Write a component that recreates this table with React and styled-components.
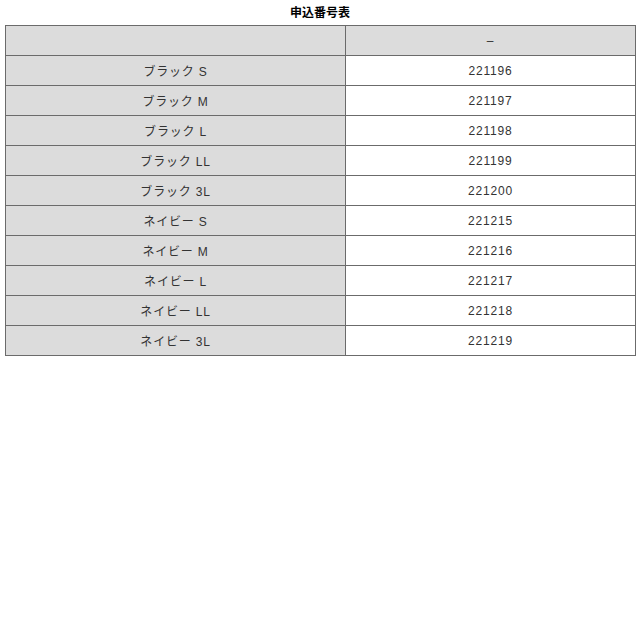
import React from 'react';
import styled, { createGlobalStyle } from 'styled-components';

const GlobalStyle = createGlobalStyle`
    body {
        margin: 0;
        background: #ffffff;
        font-family: "Liberation Sans", "Noto Sans CJK JP", sans-serif;
        color: #333333;
    }
`;

const Wrapper = styled.div`
    padding: 0 5px;
`;

const Title = styled.div`
    height: 25px;
    line-height: 26px;
    text-align: center;
    font-size: 12px;
    font-weight: bold;
    color: #000000;
`;

const Table = styled.table`
    width: 631px;
    border-collapse: collapse;
    table-layout: fixed;
    font-size: 12px;
    letter-spacing: 0.8px;
`;

const Cell = styled.td`
    height: 29px;
    padding: 0;
    border: 1px solid #6b6b6b;
    text-align: center;
    vertical-align: middle;
    background: ${p => (p.$shaded ? '#dcdcdc' : '#ffffff')};
    color: #333333;
`;

const rows = [
    ['ブラック S', '221196'],
    ['ブラック M', '221197'],
    ['ブラック L', '221198'],
    ['ブラック LL', '221199'],
    ['ブラック 3L', '221200'],
    ['ネイビー S', '221215'],
    ['ネイビー M', '221216'],
    ['ネイビー L', '221217'],
    ['ネイビー LL', '221218'],
    ['ネイビー 3L', '221219'],
];

export default function App() {
    return (
        <>
            <GlobalStyle />
            <Wrapper>
                <Title>申込番号表</Title>
                <Table>
                    <colgroup>
                        <col style={{ width: '340px' }} />
                        <col />
                    </colgroup>
                    <tbody>
                        <tr>
                            <Cell $shaded></Cell>
                            <Cell $shaded>–</Cell>
                        </tr>
                        {rows.map(([name, code]) => (
                            <tr key={code}>
                                <Cell $shaded>{name}</Cell>
                                <Cell>{code}</Cell>
                            </tr>
                        ))}
                    </tbody>
                </Table>
            </Wrapper>
        </>
    );
}
